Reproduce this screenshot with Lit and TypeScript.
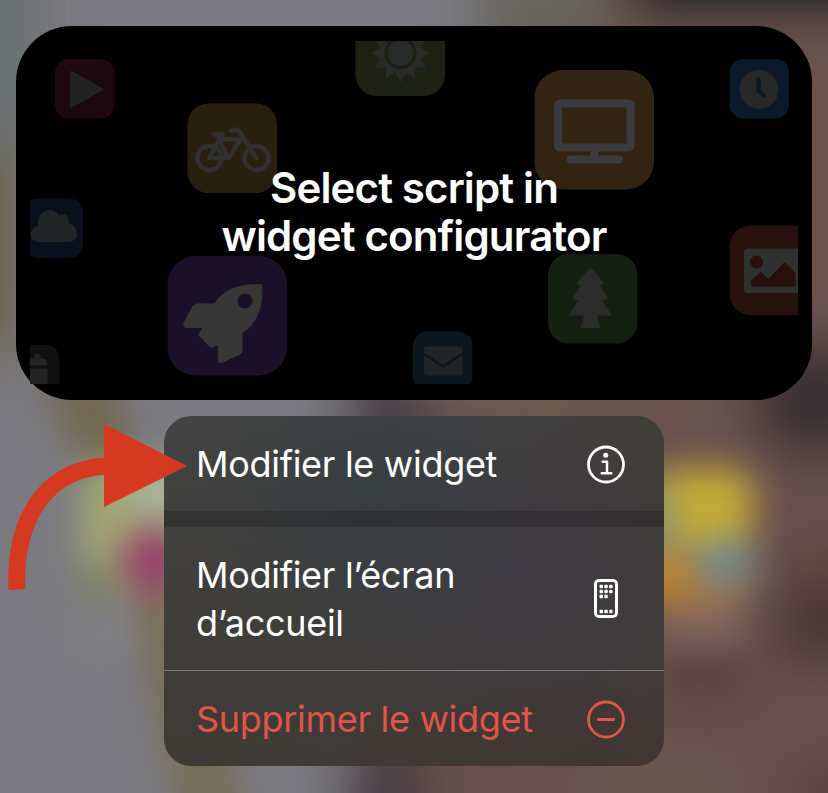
import { LitElement, html, css, svg } from "lit";
import { customElement } from "lit/decorators.js";

@customElement("blurred-wallpaper")
class BlurredWallpaper extends LitElement {
  static styles = css`
    :host { display: block; width: 828px; height: 793px; }
    svg { display: block; }
  `;
  render() {
    return html`<svg width="828" height="793" viewBox="0 0 828 793" aria-hidden="true">
      <defs>
        <filter id="wide" x="-150" y="-150" width="1130" height="1100" filterUnits="userSpaceOnUse" color-interpolation-filters="sRGB"><feGaussianBlur stdDeviation="27" /></filter>
        <filter id="soft" x="-150" y="-150" width="1130" height="1100" filterUnits="userSpaceOnUse" color-interpolation-filters="sRGB"><feGaussianBlur stdDeviation="17" /></filter>
      </defs>
      <rect width="828" height="793" fill="#7b7a80" />
      <g filter="url(#wide)">
        <path d="M360 380H950V900H360z" fill="#6a504d" />
        <path d="M480 -120H950V460H480z" fill="#6b524d" />
        <path d="M-150 -80H38V150H-150z" fill="#697071" />
        <path d="M-150 150H16V355H-150z" fill="#6b6146" />
        <path d="M350 365H425V470H350z" fill="#463d44" />
        <path d="M350 740H420V900H350z" fill="#453b41" />
        <path d="M480 -120H605V60H480z" fill="#67655e" />
        <path d="M635 -150H1000V5H635z" fill="#17191f" />
        <ellipse cx="815" cy="400" rx="60" ry="55" fill="#382d31" />
        <ellipse cx="822" cy="625" rx="42" ry="36" fill="#442c30" />
        <ellipse cx="702" cy="675" rx="50" ry="22" fill="#563a3a" />
        <ellipse cx="830" cy="570" rx="50" ry="22" fill="#60443a" />
        <ellipse cx="840" cy="795" rx="50" ry="30" fill="#5d3c45" />
        <ellipse cx="660" cy="793" rx="60" ry="22" fill="#6d5d51" />
        <ellipse cx="540" cy="403" rx="70" ry="20" fill="#716050" />
      </g>
      <g filter="url(#soft)">
        <path d="M38 370H112L135 460H80z" fill="#74694e" />
        <path d="M130 590H180L250 830H185z" fill="#796e55" />
        <rect x="80" y="462" width="150" height="134" rx="24" fill="#a0a673" />
        <ellipse cx="160" cy="488" rx="34" ry="24" fill="#acb7a4" />
        <ellipse cx="98" cy="582" rx="20" ry="20" fill="#7d8562" />
        <ellipse cx="155" cy="561" rx="34" ry="34" fill="#954069" />
        <rect x="80" y="622" width="60" height="24" fill="#858489" />
        <rect x="620" y="466" width="136" height="130" rx="20" fill="#9a8754" />
        <ellipse cx="706" cy="506" rx="47" ry="38" fill="#c2ac36" />
        <ellipse cx="660" cy="518" rx="14" ry="18" fill="#7b938c" />
        <ellipse cx="664" cy="583" rx="36" ry="26" fill="#bf832e" />
        <ellipse cx="724" cy="561" rx="32" ry="19" fill="#6c879a" />
        <ellipse cx="705" cy="606" rx="38" ry="14" fill="#8f6d4f" />
        <rect x="650" y="622" width="95" height="20" fill="#826c67" />
      </g>
    </svg>`;
  }
}

const tile = (x: number, y: number, size: number, fill: string) => svg`
  <rect x=${x} y=${y} width=${size} height=${size} rx=${size * 0.235} fill=${fill} />`;

const sunRays = (cx: number, cy: number, outer: number, inner: number, count: number) =>
  Array.from({ length: count * 2 }, (_, i) => {
    const r = i % 2 ? inner : outer;
    const a = Math.PI / 2 + (i * Math.PI) / count;
    return `${(cx + r * Math.cos(a)).toFixed(1)},${(cy + r * Math.sin(a)).toFixed(1)}`;
  }).join(" ");

@customElement("script-widget")
class ScriptWidget extends LitElement {
  static styles = css`
    :host {
      display: grid;
      box-sizing: border-box;
      width: 796px;
      height: 374px;
      padding: 15px 14px 16px;
      border-radius: 56px;
      background: #000;
    }
    .scene, .title { grid-area: 1 / 1; }
    .scene { display: block; }
    .title {
      align-self: center;
      margin: 0 0 1px;
      text-align: center;
      color: #fff;
      font: 600 42px/48.5px Inter, "Liberation Sans", sans-serif;
      letter-spacing: -0.86px;
      z-index: 1;
    }
  `;
  render() {
    return html`
      <svg class="scene" width="768" height="343" viewBox="30 41 768 343" aria-hidden="true">
        ${tile(55, 59, 59.5, "#1d0810")}
        <path d="M71.500 72.500V106L101.500 89.300z" fill="#232324" stroke="#232324" stroke-width="3" stroke-linejoin="round" />

        ${tile(187.500, 103.500, 89.500, "#292010")}
        <g fill="none" stroke="#303031" stroke-width="4.500" stroke-linecap="round" stroke-linejoin="round">
          <circle cx="209.500" cy="158" r="12" />
          <circle cx="256.500" cy="158" r="12" />
          <path d="M209.500 158L219 139.500H240L229 158H209.500M219 139.500L228 158M214 134.500H223M220 139L218 135M231 131L236 129.500Q240 130 242 136L256.500 158" />
        </g>

        ${tile(355.500, 6.500, 89.500, "#1e2212")}
        <polygon points=${sunRays(400.500, 53, 29.500, 20.500, 12)} fill="#292a2a" />
        <circle cx="400.500" cy="53" r="14.500" fill="#292a2a" stroke="#1c2012" stroke-width="3" />

        ${tile(534.500, 70, 119.500, "#322313")}
        <rect x="558" y="103.500" width="72.500" height="44" rx="2" fill="none" stroke="#3b3b3d" stroke-width="8" />
        <path d="M594.500 150V160" stroke="#3b3b3d" stroke-width="8" />
        <path d="M570.500 159.500H619" stroke="#3b3b3d" stroke-width="8" stroke-linecap="round" />

        ${tile(729.500, 59, 59.500, "#0c192a")}
        <circle cx="759" cy="89.500" r="19.500" fill="#27282a" />
        <path d="M758.500 79.500V91L763.500 95" fill="none" stroke="#101a27" stroke-width="4.500" stroke-linecap="round" stroke-linejoin="round" />

        ${tile(23.500, 198.500, 59.500, "#0a0f1d")}
        <path d="M39 242C34 242 31 239 31 234.500C31 230 34 227 38 226C37 216 43 210 49.500 210C54 210 57 212 58.500 215C64 212.500 70 216 69 223C74 225 77 229 77 233.500C77 239 73 242 68 242z" fill="#222526" />

        ${tile(167.500, 256, 119.500, "#1b1029")}
        <path d="M262 284.500C241 283.500 224 288 214.500 303.500H197.500Q193.500 304 191.500 307.500L183.500 323.500Q182.500 328 187.500 328H202L198.500 335L209.500 347Q212 348.500 217.500 345L218 360Q218.500 364.500 223 362.500L239 355Q242.500 353 242.500 349.500V333C259.500 321.500 263.500 304 262 284.500z" fill="#373738" />
        <circle cx="245" cy="301" r="7.500" fill="#1b1029" />

        ${tile(0, 345, 59.500, "#101011")}
        <path d="M30 358.500H34.500V355Q37.500 352 40.500 355V358.500H44Q47.500 359 47.500 365.500H30zM30 368.500H47.500V384H30z" fill="#242425" />

        ${tile(548, 254, 89.500, "#152012")}
        <path d="M590 268Q591.500 268 593 270L604.500 283.500L600.500 285.500L608 298.500L602.500 300.500L612 315.500H597L600 328H580.500L584 315.500H568L578 300.500L572.500 298.500L580.500 285.500L576.500 283.500L588 270Q589 268 590 268z" fill="#2b2b2c" />

        ${tile(729.500, 225.500, 89.500, "#28110d")}
        <rect x="744" y="248.500" width="65" height="44.500" rx="4" fill="#2f3030" />
        <circle cx="756.500" cy="262" r="6.500" fill="#28110d" />
        <path d="M751 286.500V280.500L760.500 272L768.500 279L784.500 262L795.500 273V286.500z" fill="#28110d" />

        ${tile(413, 331.500, 59.500, "#0c161c")}
        <rect x="424" y="346.500" width="38.500" height="29" rx="3" fill="#222426" />
        <path d="M424 354L443 366.500L462.500 354" fill="none" stroke="#0f171c" stroke-width="2.500" />
      </svg>
      <h1 class="title">Select script in<br />widget configurator</h1>
    `;
  }
}

@customElement("context-menu")
class ContextMenu extends LitElement {
  static styles = css`
    :host {
      display: flex;
      flex-direction: column;
      width: 500px;
      height: 350px;
      border-radius: 27px;
      overflow: hidden;
      color: #fff;
      font: 400 36px/48px Inter, "Liberation Sans", sans-serif;
      background:
        radial-gradient(ellipse 170px 150px at 205px 90px, #383e41, #383e4100),
        radial-gradient(ellipse 230px 180px at 350px 150px, #3e3a42, #3e3a4200),
        radial-gradient(ellipse 300px 150px at 430px 350px, #423634, #42363400),
        radial-gradient(ellipse 200px 180px at 500px 70px, #413c35, #413c3500),
        linear-gradient(180deg, #424343, #403e3a 60%, #3e3b37);
    }
    .row {
      display: flex;
      align-items: center;
      justify-content: space-between;
      box-sizing: border-box;
      flex: none;
      height: 95px;
      padding: 0 37px 0 32px;
    }
    .tall { height: 143px; }
    .gap { flex: none; height: 16px; background: rgba(25, 24, 26, 0.3); }
    .line { flex: none; height: 1px; background: #7b7877; }
    .danger { color: #e15549; }
    .label { white-space: nowrap; letter-spacing: -0.3px; }
    svg { display: block; flex: none; }
  `;
  render() {
    return html`
      <div class="row">
        <span class="label">Modifier le widget</span>
        <svg width="42" height="42" viewBox="0 0 42 42" fill="none" stroke="currentColor">
          <circle cx="21" cy="21.500" r="17.500" stroke-width="2.800" />
          <circle cx="20.700" cy="12.300" r="2.500" fill="currentColor" stroke="none" />
          <path d="M17.700 18.800H22V30M16.700 30.300H26.300" stroke-width="2.500" stroke-linecap="round" stroke-linejoin="round" />
        </svg>
      </div>
      <div class="gap"></div>
      <div class="row tall">
        <span class="label">Modifier l’écran<br />d’accueil</span>
        <svg width="42" height="42" viewBox="0 0 42 42" fill="none" stroke="currentColor">
          <rect x="10.500" y="2.500" width="21" height="36" rx="3.500" stroke-width="3" />
          <g fill="currentColor" stroke="none">
            ${[[0, 0], [1, 0], [2, 0], [0, 1], [1, 1], [2, 1], [0, 2], [1, 2], [0, 5], [1, 5], [2, 5]].map(
              ([c, r]) => svg`<rect x=${14.5 + c * 4.8} y=${6.8 + r * 5} width="3.500" height="3.400" rx="0.900" />`
            )}
          </g>
        </svg>
      </div>
      <div class="line"></div>
      <div class="row danger">
        <span class="label">Supprimer le widget</span>
        <svg width="42" height="42" viewBox="0 0 42 42" fill="none" stroke="currentColor" stroke-linecap="round">
          <circle cx="21" cy="21.500" r="17.500" stroke-width="2.800" />
          <path d="M13.300 21.500H28.700" stroke-width="2.800" />
        </svg>
      </div>
    `;
  }
}

@customElement("app-root")
class AppRoot extends LitElement {
  static styles = css`
    :host {
      display: grid;
      position: relative;
      width: 828px;
      height: 793px;
      overflow: hidden;
    }
    .wallpaper, .content { grid-area: 1 / 1; }
    .content {
      display: flex;
      flex-direction: column;
      align-items: center;
      gap: 16px;
      padding-top: 26px;
      z-index: 1;
    }
    .arrow { position: absolute; left: 0; top: 416px; z-index: 2; }
  `;
  render() {
    return html`
      <blurred-wallpaper class="wallpaper"></blurred-wallpaper>
      <div class="content">
        <script-widget></script-widget>
        <context-menu></context-menu>
      </div>
      <svg class="arrow" width="200" height="184" viewBox="0 416 200 184" aria-hidden="true">
        <path d="M17 589.500C14 530 38 470 106 466" fill="none" stroke="#d5391f" stroke-width="17" />
        <path d="M104 424V507L187 466z" fill="#d5391f" />
      </svg>
    `;
  }
}
